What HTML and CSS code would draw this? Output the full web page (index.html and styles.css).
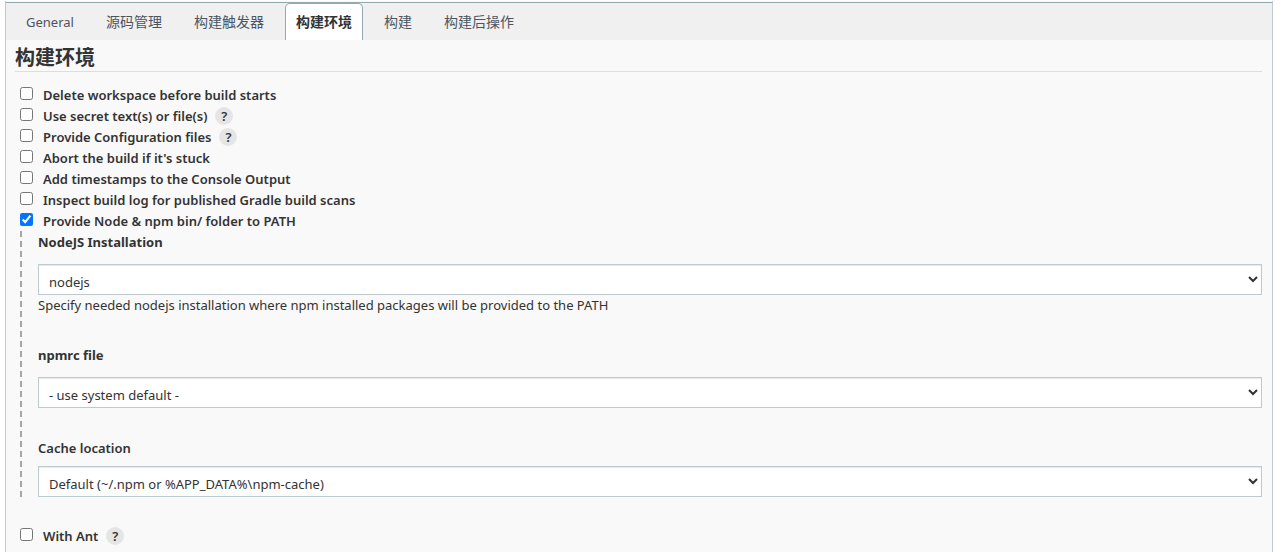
FILE: index.html
```html
<!DOCTYPE html>
<html lang="zh-CN">
<head>
<meta charset="utf-8">
<title>构建环境</title>
<link rel="stylesheet" href="styles.css">
</head>
<body>
<main class="panel">
  <nav class="tabs">
    <a class="tab tab-latin" href="#general">General</a>
    <a class="tab" href="#scm">源码管理</a>
    <a class="tab" href="#triggers">构建触发器</a>
    <a class="tab tab-active" href="#environment" aria-current="page">构建环境</a>
    <a class="tab" href="#build">构建</a>
    <a class="tab" href="#post">构建后操作</a>
  </nav>
  <form class="content">
    <h1 class="heading">构建环境</h1>
    <div class="option"><input class="check" type="checkbox" id="delete"><label for="delete">Delete workspace before build starts</label></div>
    <div class="option"><input class="check" type="checkbox" id="secret"><label for="secret">Use secret text(s) or file(s)</label><button class="help" type="button">?</button></div>
    <div class="option"><input class="check" type="checkbox" id="config"><label for="config">Provide Configuration files</label><button class="help" type="button">?</button></div>
    <div class="option"><input class="check" type="checkbox" id="abort"><label for="abort">Abort the build if it's stuck</label></div>
    <div class="option"><input class="check" type="checkbox" id="timestamps"><label for="timestamps">Add timestamps to the Console Output</label></div>
    <div class="option"><input class="check" type="checkbox" id="gradle"><label for="gradle">Inspect build log for published Gradle build scans</label></div>
    <div class="option"><input class="check" type="checkbox" id="node" checked><label for="node">Provide Node &amp; npm bin/ folder to PATH</label></div>
    <div class="nested">
      <div class="field">
        <label class="field-label strong" for="installation">NodeJS Installation</label>
        <select class="select" id="installation"><option>nodejs</option></select>
        <p class="hint">Specify needed nodejs installation where npm installed packages will be provided to the PATH</p>
      </div>
      <div class="field">
        <label class="field-label strong" for="npmrc">npmrc file</label>
        <select class="select" id="npmrc"><option>- use system default -</option></select>
      </div>
      <div class="field field-compact">
        <label class="field-label" for="cache">Cache location</label>
        <select class="select" id="cache"><option>Default (~/.npm or %APP_DATA%\npm-cache)</option></select>
      </div>
    </div>
    <div class="option"><input class="check" type="checkbox" id="ant"><label for="ant">With Ant</label><button class="help" type="button">?</button></div>
  </form>
</main>
</body>
</html>
```

FILE: styles.css
```css
* {
  box-sizing: border-box;
}

body {
  margin: 0;
  padding: 1px 8px 0 5px;
  background: #fff;
  color: #333;
  font-family: "Noto Sans", "Noto Sans CJK SC", sans-serif;
  font-size: 13px;
  line-height: 20px;
}

.panel {
  min-height: calc(100vh - 1px);
  padding-top: 1px;
  border: solid #bfcacf;
  border-width: 0 1px;
  background: #f9f9f9;
}

.tabs {
  display: flex;
  height: 38px;
  padding-left: 9px;
  border-top: 1px solid #93a9b1;
  background: #f0f0f0;
}

.tab {
  padding: 8px 10px 0;
  border: 1px solid transparent;
  border-bottom: 0;
  margin-right: 10px;
  color: #4d545d;
  font-size: 14px;
  text-decoration: none;
}

.tab-latin {
  font-size: 13px;
}

.tab-active {
  border-color: #93a9b1;
  border-radius: 5px 5px 0 0;
  background: #fff;
  color: #333;
  font-weight: 700;
}

.content {
  padding: 5px 10px 0 9px;
}

.heading {
  margin: 0 0 12px;
  border-bottom: 1px solid #dcdfdf;
  font-size: 20px;
  line-height: 26px;
}

.option {
  display: flex;
  align-items: center;
  height: 21px;
  padding-left: 5px;
  font-weight: 600;
}

.check {
  width: 13px;
  height: 13px;
  margin: 0 10px 2px 0;
}

.help {
  width: 18px;
  height: 18px;
  margin-left: 8px;
  padding: 0;
  border: 0;
  border-radius: 50%;
  background: #e5e5e5;
  color: #333;
  font: inherit;
  line-height: 18px;
}

.nested {
  display: grid;
  gap: 30px;
  margin: 0 0 28px 5px;
  padding: 1px 0 0 16px;
  border-left: 2px dashed #a6a6a6;
}

.field {
  display: grid;
  gap: 12px;
}

.field-compact {
  gap: 8px;
}

.field-label {
  font-weight: 600;
}

.strong {
  font-weight: 700;
}

.select {
  width: 100%;
  height: 31px;
  padding: 4px 6px 0;
  border: 1px solid #bfcacf;
  border-radius: 0;
  background: #fff;
  box-shadow: inset 0 1px 1px #e8e8e8;
  color: #333;
  font: inherit;
}

.hint {
  margin: -12px 0 0;
}
```
